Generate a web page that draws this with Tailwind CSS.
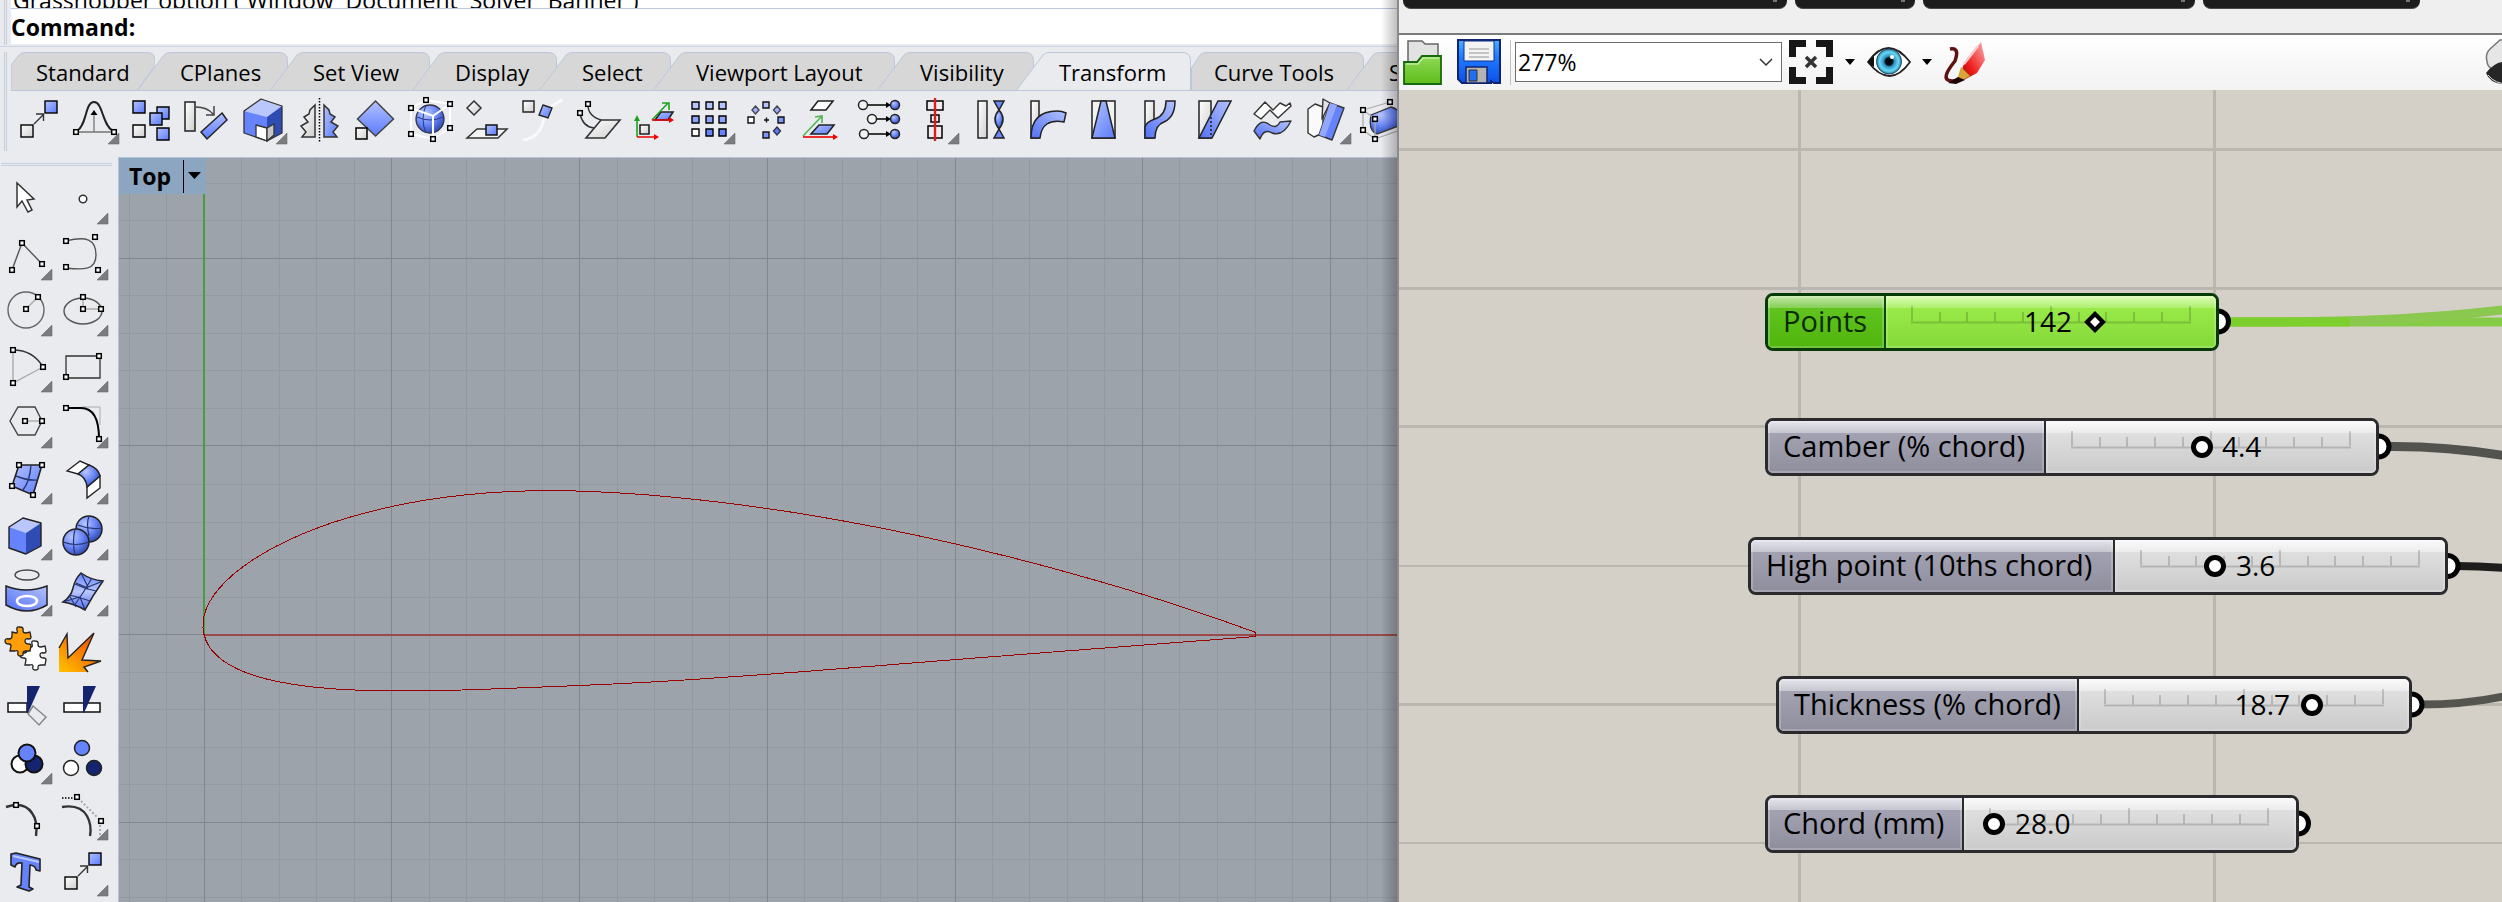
<!DOCTYPE html>
<html lang="en">
<head>
<meta charset="utf-8">
<title>Airfoil definition</title>
<script src="https://cdn.jsdelivr.net/npm/@tailwindcss/browser@4"></script>
</head>
<body class="bg-[#eaebef] text-black font-['Open_Sans','Noto_Sans',sans-serif]">

<!-- Shared shapes -->
<svg class="absolute size-0" aria-hidden="true">
  <defs>
    <linearGradient id="b" x1="0" y1="0" x2="1" y2="1"><stop offset="0" stop-color="#b3c2ff"/><stop offset="1" stop-color="#5b7bfb"/></linearGradient>
    <linearGradient id="bv" x1="0" y1="0" x2="0" y2="1"><stop offset="0" stop-color="#b3c2ff"/><stop offset="1" stop-color="#5b7bfb"/></linearGradient>
    <linearGradient id="bu" x1="0" y1="1" x2="1" y2="0"><stop offset="0" stop-color="#5270f5"/><stop offset="1" stop-color="#b3c2ff"/></linearGradient>
    <linearGradient id="w" x1="0" y1="0" x2="1" y2="1"><stop offset="0" stop-color="#fff"/><stop offset="1" stop-color="#cfcfcf"/></linearGradient>
    <radialGradient id="s" cx=".35" cy=".3" r=".8"><stop offset="0" stop-color="#b9c7ff"/><stop offset=".5" stop-color="#6a87f7"/><stop offset="1" stop-color="#2540a8"/></radialGradient>
    <linearGradient id="mesh" x1="0" y1="0" x2="0" y2="1"><stop offset="0" stop-color="#6583fb"/><stop offset=".5" stop-color="#bac7fd"/><stop offset="1" stop-color="#5270f5"/></linearGradient>
    <linearGradient id="fire" x1="0" y1="1" x2="1" y2="0"><stop offset="0" stop-color="#ffc400"/><stop offset="1" stop-color="#f23c00"/></linearGradient>
    <linearGradient id="gf" x1="0" y1="0" x2="0" y2="1"><stop offset="0" stop-color="#8fd957"/><stop offset="1" stop-color="#5fbd1b"/></linearGradient>
    <linearGradient id="sv" x1="0" y1="0" x2="0" y2="1"><stop offset="0" stop-color="#45b0ff"/><stop offset=".4" stop-color="#1f7bff"/><stop offset="1" stop-color="#0b50e8"/></linearGradient>
    <linearGradient id="red" x1="1" y1="0" x2="0" y2="1"><stop offset="0" stop-color="#f7b0b0"/><stop offset=".6" stop-color="#f01a1a"/><stop offset="1" stop-color="#7a0a0a"/></linearGradient>
    <radialGradient id="iris"><stop offset="0" stop-color="#000"/><stop offset=".3" stop-color="#04141c"/><stop offset=".42" stop-color="#2b8fc0"/><stop offset=".75" stop-color="#6ad7f5"/><stop offset="1" stop-color="#2a86a8"/></radialGradient>
    <rect id="n" x="-2.3" y="-2.3" width="4.6" height="4.6" fill="#fff" stroke="#000" stroke-width="1.5"/>
    <path id="m" d="M52 42v11H41z" fill="#7b7c7f" stroke="#6a6b6e" stroke-width=".6"/>
    <g id="mv"><rect x="10" y="34" width="12" height="12" fill="url(#w)" stroke="#000" stroke-width="1.4"/><rect x="34" y="10" width="12" height="12" fill="url(#b)" stroke="#000" stroke-width="1.4"/><path d="M23 33l9-9M25 23h7.500v7" fill="none" stroke="#333" stroke-width="1.4"/></g>
    <path id="pz" d="M-9-9l4 1q2 0 1-3-1-4 3-3 4 0 3 4 0 2 3 2l4-1 1 5q0 2-2 2-4-1-4 2t4 3q2 0 2 2l-1 5-4 0q-3 0-3 2 1 3-3 3-3 0-2-4 0-2-3-1l-5 0 1-5q0-2-2-2-4 0-4-3t4-2q3 0 3-3z"/>
    <g id="ticks" fill="none" stroke="#000" stroke-opacity=".16" stroke-width="2"><path d="M0 16.500h280M1 0v15M29 6v10M56 6v10M84 6v10M112 6v10M140 0v16M168 6v10M195 6v10M223 6v10M251 6v10M279 0v15"/></g>
  </defs>
</svg>

<main class="grid h-screen grid-cols-[1397fr_1105fr] overflow-hidden">

  <!-- Rhino window -->
  <section class="relative flex min-w-0 flex-col overflow-hidden">
    <div class="flex h-[47px] shrink-0 gap-1 border-b border-[#ccd4e2] pl-1">
      <div class="h-[45px] w-[3px] border-x border-[#c3ccdb]"></div>
      <div class="flex h-11 min-w-0 flex-1 flex-col bg-white">
        <div class="flex h-[9px] shrink-0 items-end overflow-hidden border-b border-[#bcc6dc] pl-[2px]"><span class="whitespace-pre text-[23px] leading-4">Grasshopper option ( Window  Document  Solver  Banner )</span></div>
        <label class="flex flex-1 items-center gap-2 text-[23px] font-bold leading-8">Command:<input aria-label="Command" class="h-8 flex-1 font-normal outline-none"></label>
      </div>
    </div>

    <div class="flex h-[110px] shrink-0 gap-1 pl-1 pt-[5px]">
      <div class="h-[99px] w-[3px] border-x border-[#c3ccdb]"></div>
      <div class="min-w-0 flex-1">
        <div class="flex h-[39px] overflow-hidden border-b border-[#bcc6dc] text-[22px] leading-[38px]" role="tablist">
          <button role="tab" class="relative h-[39px] w-[144px] shrink-0 pl-[25px] text-left"><svg class="absolute inset-0 -z-10" width="144" height="39"><path d="M0 39V13L8 3Q10 .5 14 .5H136q8 0 8 8V13L126 39z" fill="#d7d7d7" stroke="#bcc6dc"/></svg>Standard</button>
          <button role="tab" class="relative -ml-[18px] h-[39px] w-[151px] shrink-0 pl-[43px] text-left"><svg class="absolute inset-0 -z-10" width="151" height="39"><path d="M0 39L27 3Q29 .5 34 .5H142q8.500 0 8.500 8V39" fill="#d7d7d7" stroke="#bcc6dc"/></svg>CPlanes</button>
          <button role="tab" class="relative -ml-[18px] h-[39px] w-[160px] shrink-0 pl-[43px] text-left"><svg class="absolute inset-0 -z-10" width="160" height="39"><path d="M0 39L27 3Q29 .5 34 .5H151q8.500 0 8.500 8V39" fill="#d7d7d7" stroke="#bcc6dc"/></svg>Set View</button>
          <button role="tab" class="relative -ml-[18px] h-[39px] w-[145px] shrink-0 pl-[43px] text-left"><svg class="absolute inset-0 -z-10" width="145" height="39"><path d="M0 39L27 3Q29 .5 34 .5H136q8.500 0 8.500 8V39" fill="#d7d7d7" stroke="#bcc6dc"/></svg>Display</button>
          <button role="tab" class="relative -ml-[18px] h-[39px] w-[132px] shrink-0 pl-[43px] text-left"><svg class="absolute inset-0 -z-10" width="132" height="39"><path d="M0 39L27 3Q29 .5 34 .5H123q8.500 0 8.500 8V39" fill="#d7d7d7" stroke="#bcc6dc"/></svg>Select</button>
          <button role="tab" class="relative -ml-[18px] h-[39px] w-[242px] shrink-0 pl-[43px] text-left"><svg class="absolute inset-0 -z-10" width="242" height="39"><path d="M0 39L27 3Q29 .5 34 .5H233q8.500 0 8.500 8V39" fill="#d7d7d7" stroke="#bcc6dc"/></svg>Viewport Layout</button>
          <button role="tab" class="relative -ml-[18px] h-[39px] w-[157px] shrink-0 pl-[43px] text-left"><svg class="absolute inset-0 -z-10" width="157" height="39"><path d="M0 39L27 3Q29 .5 34 .5H148q8.500 0 8.500 8V39" fill="#d7d7d7" stroke="#bcc6dc"/></svg>Visibility</button>
          <button role="tab" aria-selected="true" class="relative -ml-[18px] h-[39px] w-[175px] shrink-0 pl-[43px] text-left"><svg class="absolute inset-0 -z-10" width="175" height="39"><path d="M0 39L27 3Q29 .5 34 .5H166q8.500 0 8.500 8V39" fill="#eaebef" stroke="#bcc6dc"/></svg>Transform</button>
          <button role="tab" class="relative h-[39px] w-[173px] shrink-0 pl-[23px] text-left"><svg class="absolute inset-0 -z-10" width="173" height="39"><path d="M.5 39V16L9 3Q11 .5 15 .5H164q8.500 0 8.500 8V39" fill="#d7d7d7" stroke="#bcc6dc"/></svg>Curve Tools</button>
          <button role="tab" class="relative -ml-[18px] h-[39px] w-[200px] shrink-0 pl-[43px] text-left"><svg class="absolute inset-0 -z-10" width="200" height="39"><path d="M0 39L27 3Q29 .5 34 .5H200V39" fill="#d7d7d7" stroke="#bcc6dc"/></svg>S</button>
        </div>

        <!-- Transform tools -->
        <div class="flex h-14 overflow-hidden [&>button]:h-14 [&>button]:w-14 [&>button]:shrink-0" role="toolbar" aria-label="Transform">
          <button aria-label="Move"><svg width="56" height="56"><use href="#mv"/></svg></button>
          <button aria-label="Soft move"><svg width="56" height="56" fill="none"><path d="M9 41H47M27 41V24" stroke="#777" stroke-width="1.300"/><path d="M23.500 24L27 19l3.500 5z" fill="#000"/><path d="M10 40C20 34 18 11 27 11s8 23 19 29" stroke="#222" stroke-width="2"/><use href="#n" x="9" y="41"/><use href="#n" x="47" y="41"/><use href="#m"/></svg></button>
          <button aria-label="Copy"><svg width="56" height="56" stroke="#000" stroke-width="1.400" fill="url(#b)"><path d="M10 10h12v12H10z"/><path d="M34 16h12v12H34z"/><path d="M27 22h12v12H27z"/><path d="M34 37h12v12H34z"/><path d="M10 34h12v12H10z" fill="url(#w)"/></svg></button>
          <button aria-label="Rotate"><svg width="56" height="56" stroke="#222" stroke-width="1.500" fill="none"><path d="M6 11h10v29H6z" fill="url(#w)"/><path d="M17 16q11 0 17 7M35 15v9h-8" stroke="#444"/><path d="M43 22l5 7-20 19-6-7z" fill="url(#bv)"/></svg></button>
          <button aria-label="Scale"><svg width="56" height="56" stroke="none" stroke-width="1.300" stroke-linejoin="round"><path d="M9 20l17-12 21 7-15 11z" fill="#bac7fd"/><path d="M9 20l23 6v24L9 42z" fill="#6583fb"/><path d="M47 15v27l-15 8V26z" fill="#2f4bb4"/><path d="M21 34l11 3v13l-11-4z" fill="#fff" stroke="#333"/><path d="M32 37l7-4v11l-7 6z" fill="#c8c8c8" stroke="#333"/><path d="M9 20l17-12 21 7v27l-15 8L9 42z" fill="none" stroke="#333"/><use href="#m"/></svg></button>
          <button aria-label="Mirror"><svg width="56" height="56" stroke="#333" stroke-width="1.500"><path d="M24 14v32H11l4-5-5-6 7-4-4-5 5-3 1-4z" fill="url(#w)"/><path d="M33 14v32h13l-4-5 5-6-7-4 4-5-5-3-1-4z" fill="url(#b)"/><path d="M28.500 7v44" stroke="#000" stroke-dasharray="1.500 1.500"/></svg></button>
          <button aria-label="Orient"><svg width="56" height="56" stroke="#444" stroke-width="1.500"><path d="M28.500 10l18 18-18 17-18-17z" fill="url(#bv)"/><path d="M9 37h11v11H9z" fill="url(#w)" stroke="#000"/></svg></button>
          <button aria-label="Cage edit"><svg width="56" height="56" fill="none"><circle cx="27" cy="28" r="14" fill="url(#s)" stroke="#334" stroke-width="1.300"/><path d="M14 26q13 6 26 0M23 14q-6 14 0 28" stroke="#243a90"/><path d="M23 9L47 13V37L30 48 8 43V17zM8 17l22 8 17-12M30 25v23" stroke="#fff" stroke-width="2"/><use href="#n" x="23" y="9"/><use href="#n" x="47" y="13"/><use href="#n" x="8" y="17"/><use href="#n" x="8" y="43"/><use href="#n" x="47" y="37"/><use href="#n" x="30" y="48"/></svg></button>
          <button aria-label="Project"><svg width="56" height="56" stroke="#333" stroke-width="1.500"><path d="M15 10l7 7-7 7-7-7z" fill="url(#w)"/><path d="M18 38h30l-9 9H8z" fill="#f4f4f4"/><path d="M27 34h11v10H27z" fill="url(#b)" stroke="#111"/></svg></button>
          <button aria-label="Orient on curve"><svg width="56" height="56" stroke="#222" stroke-width="1.400"><path d="M8 49Q24 47 28 31T48 9" fill="none" stroke="#fafafc" stroke-width="3"/><path d="M8 10h11v11H8z" fill="url(#w)"/><path d="M28 14l9 3-4 10-9-3z" fill="url(#b)"/></svg></button>
          <button aria-label="Orient on surface"><svg width="56" height="56" stroke="#333" stroke-width="1.400" fill="none"><path d="M17 14q0 11 13 15M9 23q3 13 14 14"/><path d="M30 29h19L34 47H15z" fill="url(#w)" stroke-width="1.600"/><use href="#n" x="17" y="13"/><use href="#n" x="9" y="22"/></svg></button>
          <button aria-label="Remap CPlane"><svg width="56" height="56" stroke-width="1.600" fill="none"><path d="M34 21h12l-5 8H28z" fill="url(#b)" stroke="#222"/><path d="M10 46V27M25 29L41 12M35 12h7v7" stroke="#1fa31f"/><path d="M7 30l3-6 3 6z" fill="#1fa31f"/><path d="M10 46h17M25 29h18" stroke="#e00"/><path d="M27 43l5 3-5 3zM42 26l5 3-5 3z" fill="#e00"/><path d="M13 34h9v9h-9z" fill="url(#w)" stroke="#222"/></svg></button>
          <button aria-label="Array"><svg width="56" height="56" stroke="#000" stroke-width="1.400"><path d="M9 11h7v7H9zM23 11h7v7h-7zM36 11h7v7h-7z" fill="#b5c4fd"/><path d="M9 25h7v7H9zM23 25h7v7h-7zM36 25h7v7h-7z" fill="#8ca3fc"/><path d="M23 38h7v7h-7zM36 38h7v7h-7z" fill="#6583fb"/><path d="M9 38h7v7H9z" fill="#fff"/><use href="#m" stroke="none"/></svg></button>
          <button aria-label="Polar array"><svg width="56" height="56" stroke="#111" stroke-width="1.400" fill="#9db0fc"><path d="M24 11h6v6h-6z" fill="#b5c4fd"/><path d="M39 26h6v6h-6zM24 41h6v6h-6z" fill="#7d97fb"/><path d="M9 26h6v6H9z" fill="#fff"/><path d="M16.500 15l3.500 4-3.500 4-3.500-4zM38 15l3.500 4-3.500 4-3.500-4z" stroke="#445"/><path d="M38 36l3.500 4-3.500 4-3.500-4z" fill="#5b7bfb" stroke="#334"/><path d="M25 29h5M27.500 26.500v5"/></svg></button>
          <button aria-label="Set points"><svg width="56" height="56" stroke="#222" stroke-width="1.600" fill="none"><path d="M23 10h15l-7 9H16z" fill="#fff"/><path d="M24 34h15l-7 9H16z" fill="url(#b)"/><path d="M8 45l19-20M20 26l7-1v7" stroke="#54b354"/><path d="M8 46h30" stroke="#e00"/><path d="M38 43l5 3-5 3z" fill="#e00" stroke="none"/></svg></button>
          <button aria-label="Align"><svg width="56" height="56" stroke="#222" stroke-width="1.500"><path d="M17 14h18M26 28h9M17 43h18" stroke="#000"/><path d="M35 11l5 3-5 3zM35 25l5 3-5 3zM35 40l5 3-5 3z" stroke="none"/><g fill="#f2f2f2"><circle cx="12" cy="14" r="4.500"/><circle cx="21" cy="28" r="4.500"/><circle cx="13" cy="43" r="4.500"/></g><g fill="url(#s)"><circle cx="44" cy="14" r="4.500"/><circle cx="44" cy="28" r="4.500"/><circle cx="44" cy="43" r="4.500"/></g></svg></button>
          <button aria-label="Distribute"><svg width="56" height="56" stroke="#000" stroke-width="1.500" fill="#eee"><path d="M20 10h16v9H20zM24 24h8v7h-8zM21 35h14v12H21z"/><path d="M28 7v43" stroke="#d81e1e" stroke-width="2.400"/><use href="#m" stroke="none"/></svg></button>
          <button aria-label="Twist"><svg width="56" height="56" stroke="#222" stroke-width="1.500"><path d="M15 10h9v37h-9z" fill="url(#w)"/><path d="M31 10h10l-5 9zM36 38l5 9H31z" fill="#6a87f7"/><path d="M36 19q8 9 0 19-8-10 0-19z" fill="url(#s)"/></svg></button>
          <button aria-label="Bend"><svg width="56" height="56" stroke="#222" stroke-width="1.500"><path d="M12 10h8v37h-8z" fill="url(#w)"/><path d="M12 47C12 30 20 20 38 20q5 0 9 2l-2 9q-22-4-24 16z" fill="url(#bu)"/></svg></button>
          <button aria-label="Taper"><svg width="56" height="56" stroke="#222" stroke-width="1.500"><path d="M17 10h23v37H17z" fill="#f2f2f2"/><path d="M26 10h5l9 37H17z" fill="url(#b)"/></svg></button>
          <button aria-label="Flow"><svg width="56" height="56" stroke="#222" stroke-width="1.500"><path d="M14 10h9v37h-9z" fill="url(#w)"/><path d="M14 47V36Q15 31 24 28 35 24 35 10h9q0 16-11 21-9 3-9 16z" fill="url(#bu)"/></svg></button>
          <button aria-label="Shear"><svg width="56" height="56" stroke="#222" stroke-width="1.500"><path d="M12 10h12v37H12z" fill="url(#w)"/><path d="M31 10h13L25 47H12z" fill="url(#bu)"/><path d="M24 26v20" stroke-dasharray="2 2"/></svg></button>
          <button aria-label="Smooth"><svg width="56" height="56" stroke="#333" stroke-width="1.400" stroke-linejoin="round"><path d="M11 23l11-12 8 8 7-7 6 3 4-3 1 3-13 12-8-8-9 9z" fill="#fff"/><path d="M11 40Q18 26 27 34q7 4 10-3l11-1q-8 16-19 12-8-5-12 6z" fill="url(#bu)"/></svg></button>
          <button aria-label="Box edit"><svg width="56" height="56" stroke="#333" stroke-width="1.400" stroke-linejoin="round"><path d="M9 18l7-5 8 3v26l-9 4-6-4z" fill="#fafafa"/><path d="M24 8l7 4-8 16z" fill="#e3e3e3"/><path d="M31 12l14 5-12 32-13-5z" fill="#6583fb"/><path d="M31 12l7 2-12 32-6-2z" fill="#93a8fd" stroke="none"/><use href="#m"/></svg></button>
          <button aria-label="Cage"><svg width="56" height="56" stroke="#333" stroke-width="1.300" fill="none"><path d="M16 24l20-8q12 3 10 18l-24 9q-9-3-6-19z" fill="url(#s)"/><path d="M8 19L35 11M8 39V19l12 9v20L8 39M20 48l25-9" stroke="#aaa"/><use href="#n" x="35" y="11"/><use href="#n" x="8" y="19"/><use href="#n" x="20" y="28"/><use href="#n" x="8" y="39"/><use href="#n" x="20" y="48"/></svg></button>
        </div>
      </div>
    </div>

    <div class="flex min-h-0 flex-1">
      <!-- Main tools -->
      <div class="w-[118px] shrink-0 overflow-hidden pl-px pt-[6px]">
        <div class="mr-[6px] h-[3px] border-y border-[#c3d0e0]"></div>
        <div class="-ml-px mt-[5px] grid grid-cols-[56px_56px] auto-rows-[56px] [&>button]:h-14" role="toolbar" aria-label="Main">
          <button aria-label="Select"><svg width="56" height="56"><path d="M17 12v24l5-6 6 11 4-2-5-10 7-1z" fill="#fff" stroke="#333" stroke-width="1.500"/></svg></button>
          <button aria-label="Point"><svg width="56" height="56"><circle cx="27" cy="28" r="3.800" fill="#fff" stroke="#333" stroke-width="1.500"/><use href="#m"/></svg></button>
          <button aria-label="Polyline"><svg width="56" height="56"><path d="M12 43l10-27 20 21" fill="none" stroke="#555" stroke-width="1.400"/><use href="#n" x="22" y="16"/><use href="#n" x="12" y="43"/><use href="#n" x="42" y="37"/><use href="#m"/></svg></button>
          <button aria-label="Curve"><svg width="56" height="56"><path d="M10 14C30 9 40 12 40 28 40 43 28 43 10 41" fill="none" stroke="#555" stroke-width="1.400"/><use href="#n" x="10" y="14"/><use href="#n" x="39" y="10"/><use href="#n" x="10" y="40"/><use href="#m"/><use href="#n" x="42" y="43"/></svg></button>
          <button aria-label="Circle"><svg width="56" height="56"><g fill="none" stroke="#666" stroke-width="1.400"><circle cx="26" cy="27" r="18"/><path d="M26 26l12-12" stroke="#aaa"/></g><use href="#n" x="26" y="26"/><use href="#n" x="38" y="14"/><use href="#m"/></svg></button>
          <button aria-label="Ellipse"><svg width="56" height="56"><g fill="none" stroke="#555" stroke-width="1.400"><ellipse cx="27" cy="28" rx="19" ry="13"/><path d="M27 14v12h18" stroke="#aaa"/></g><use href="#n" x="27" y="14"/><use href="#n" x="27" y="26"/><use href="#n" x="45" y="26"/><use href="#m"/></svg></button>
          <button aria-label="Arc"><svg width="56" height="56"><g fill="none" stroke-width="1.400"><path d="M43 28L13 44V11" stroke="#aaa"/><path d="M13 11q20 0 30 17" stroke="#333"/></g><use href="#n" x="13" y="11"/><use href="#n" x="43" y="28"/><use href="#n" x="13" y="44"/><use href="#m"/></svg></button>
          <button aria-label="Rectangle"><svg width="56" height="56"><path d="M10 17h34v22H10z" fill="none" stroke="#333" stroke-width="1.300"/><use href="#n" x="43" y="17"/><use href="#n" x="10" y="38"/><use href="#m"/></svg></button>
          <button aria-label="Polygon"><svg width="56" height="56"><g fill="none" stroke="#444" stroke-width="1.400"><path d="M18 12h17l7 14-7 14H18l-8-14z"/><path d="M25 26h17" stroke="#aaa"/></g><use href="#n" x="25" y="26"/><use href="#n" x="42" y="26"/><use href="#m"/></svg></button>
          <button aria-label="Fillet"><svg width="56" height="56"><g fill="none"><path d="M26 12h18v18" stroke="#aaa"/><path d="M10 13h15q18 0 18 31" stroke="#000" stroke-width="2"/></g><use href="#n" x="10" y="13"/><use href="#m"/><use href="#n" x="43" y="44"/></svg></button>
          <button aria-label="Surface"><svg width="56" height="56"><path d="M19 14h23l-9 30-21-9z" fill="url(#b)" stroke="#222" stroke-width="1.600"/><path d="M31 14q-1 16-8 25M16 25q12 5 22 4" fill="none" stroke="#26356e" stroke-width="1.400"/><use href="#n" x="19" y="14"/><use href="#n" x="42" y="14"/><use href="#n" x="12" y="35"/><use href="#n" x="33" y="44"/><use href="#m"/></svg></button>
          <button aria-label="Fillet surface"><svg width="56" height="56" stroke="#222" stroke-width="1.400"><path d="M11 20l13-10 9 4-11 9zM31 36l13-11v12L31 47z" fill="#fff"/><path d="M22 23l11-9q9 3 11 11L31 36q-1-10-9-13z" fill="url(#s)"/><use href="#m"/></svg></button>
          <button aria-label="Box"><svg width="56" height="56" stroke="none" stroke-width="1.400" stroke-linejoin="round"><path d="M9 20l14-9 18 5-15 10z" fill="#bac7fd"/><path d="M9 20l17 6v21L9 41z" fill="#6583fb"/><path d="M41 16v23l-15 8V26z" fill="#2f4bb4"/><path d="M9 20l14-9 18 5v23l-15 8-17-6z" fill="none" stroke="#222"/><use href="#m"/></svg></button>
          <button aria-label="Boolean union"><svg width="56" height="56" stroke="#222" stroke-width="1.500"><circle cx="33" cy="22" r="13" fill="url(#s)"/><circle cx="20" cy="35" r="13" fill="url(#s)"/><path d="M7 35q13 5 26 0M19 22q-3 12 0 26M22 18q12 5 24 3M33 9q-3 8 0 20" fill="none" stroke="#26356e" stroke-width="1.200"/><use href="#m"/></svg></button>
          <button aria-label="Project curves"><svg width="56" height="56"><ellipse cx="27" cy="12" rx="12" ry="5" fill="none" stroke="#444" stroke-width="1.300"/><path d="M6 23q20 8 41 0v19q-20 12-41 0z" fill="url(#bu)" stroke="#222" stroke-width="1.500"/><ellipse cx="27" cy="38" rx="10" ry="5" fill="none" stroke="#fff" stroke-width="2.500"/><use href="#m"/></svg></button>
          <button aria-label="Mesh"><svg width="56" height="56"><path d="M25 10q10 7 22 8-10 14-18 29-10-6-22-8 8-5 10-14 2-9 8-15z" fill="url(#mesh)" stroke="#222" stroke-width="1.500"/><path d="M19 21q10 5 21 7M13 32q10 2 21 6M36 15q-8 14-18 28M25 10l7 14 15-6M20 20l12 5M7 39l17-5 5 13M13 32l7 12" fill="none" stroke="#26356e" stroke-width="1.200"/><use href="#m"/></svg></button>
          <button aria-label="Join"><svg width="56" height="56" stroke="#222" stroke-width="1.300"><use href="#pz" x="36" y="36" fill="#fff"/><use href="#pz" x="21" y="22" fill="#ff9d0a"/></svg></button>
          <button aria-label="Explode"><svg width="56" height="56"><path d="M3 53V29l8-14 1 24 26-25-12 27 19 1-17 6 4 5z" fill="url(#fire)"/><path d="M3 29l8-14 1 24 26-25-12 27 19 1-17 6 4 5" fill="none" stroke="#222" stroke-width="1.400"/></svg></button>
          <button aria-label="Trim"><svg width="56" height="56"><path d="M8 28h19v9H8z" fill="#fff" stroke="#111" stroke-width="1.500"/><path d="M33 31l13 11-7 8-11-11z" fill="none" stroke="#888" stroke-width="1.500"/><path d="M27 11h13L28 38h-1z" fill="#14246e"/></svg></button>
          <button aria-label="Split"><svg width="56" height="56"><path d="M8 28h36v9H8z" fill="#fff" stroke="#111" stroke-width="1.500"/><path d="M27 11h13L28 38h-1z" fill="#14246e"/></svg></button>
          <button aria-label="Group"><svg width="56" height="56" stroke="#111" stroke-width="2"><circle cx="20" cy="33" r="8.500" fill="#fff"/><circle cx="34" cy="33" r="8.500" fill="#14246e"/><circle cx="27" cy="22" r="8.500" fill="#6583fb"/><use href="#m"/></svg></button>
          <button aria-label="Ungroup"><svg width="56" height="56" stroke="#222" stroke-width="1.500"><circle cx="15" cy="37" r="7.500" fill="#fff"/><circle cx="38" cy="37" r="7.500" fill="#14246e"/><circle cx="26" cy="17" r="7.500" fill="#6583fb"/></svg></button>
          <button aria-label="Edit points"><svg width="56" height="56"><path d="M6 20q18-6 26 6 6 8 4 23" fill="none" stroke="#333" stroke-width="2.400"/><use href="#n" x="16" y="18"/><use href="#n" x="37" y="39"/></svg></button>
          <button aria-label="Control points"><svg width="56" height="56" fill="none"><path d="M6 20q18-3 25 9 5 9 3 20" stroke="#333" stroke-width="2.400"/><path d="M6 11h13" stroke="#000" stroke-width="1.400" stroke-dasharray="1.500 1.500"/><path d="M25 14l17 17M44 38v12" stroke="#aaa" stroke-width="2" stroke-dasharray="2 2"/><use href="#m"/><use href="#n" x="21" y="10"/><use href="#n" x="45" y="34"/></svg></button>
          <button aria-label="Text"><svg width="56" height="56"><path d="M11 11l5-1 24 6v12l-4-1q0-4-6-5l-1 22 4 2-4 2-12-4 4-2 1-22q-6-1-7 4l-4-2z" fill="#6583fb" stroke="#222" stroke-width="1.600" stroke-linejoin="round"/><path d="M13 13l26 6" stroke="#bac7fd" stroke-width="2"/></svg></button>
          <button aria-label="Move object"><svg width="56" height="56"><use href="#mv" x="-1"/><use href="#m"/></svg></button>
        </div>
      </div>

      <!-- Top viewport -->
      <div class="relative min-w-0 flex-1 overflow-hidden border-l border-t border-[#b8c2d6] bg-[#9da3ab]">
        <svg class="absolute inset-0 h-full w-full" role="img" aria-label="Airfoil curve">
          <g transform="translate(-119 -158)" fill="none" shape-rendering="crispEdges">
            <path stroke="#929aa1" d="M129.500 158v800M166.500 158v800M241.500 158v800M279.500 158v800M316.500 158v800M354.500 158v800M429.500 158v800M466.500 158v800M504.500 158v800M542.500 158v800M617.500 158v800M654.500 158v800M692.500 158v800M729.500 158v800M804.500 158v800M842.500 158v800M880.500 158v800M917.500 158v800M992.500 158v800M1029.500 158v800M1067.500 158v800M1104.500 158v800M1179.500 158v800M1217.500 158v800M1255.500 158v800M1292.500 158v800M1367.500 158v800M119 183.500h1400M119 220.500h1400M119 295.500h1400M119 333.500h1400M119 370.500h1400M119 408.500h1400M119 484.500h1400M119 522.500h1400M119 559.500h1400M119 597.500h1400M119 672.500h1400M119 709.500h1400M119 747.500h1400M119 784.500h1400M119 859.500h1400M119 897.500h1400"/>
            <path stroke="#82868f" d="M204.500 158v800M391.500 158v800M579.500 158v800M767.500 158v800M955.500 158v800M1142.500 158v800M1330.500 158v800M119 258.500h1400M119 445.500h1400M119 634.500h1400M119 822.500h1400"/>
            <path stroke="#4a9a40" stroke-width="2" d="M204 158v476"/>
            <path stroke="#9a4a4a" stroke-width="2" d="M204 635h1400"/>
            <path id="airfoil" stroke="#990000" d=""/>
          </g>
        </svg>
        <button class="relative flex h-9 w-[87px] items-center bg-[#8ca5c0] pl-[10px] text-left text-[23px] font-bold leading-8">Top
          <svg class="absolute right-0 top-0" width="26" height="36"><path d="M3.500 2v33" stroke="#000"/><path d="M8 14h13l-6.500 7z"/></svg>
        </button>
      </div>
    </div>
    <div class="pointer-events-none absolute inset-y-0 right-0 w-4 bg-linear-to-l from-black/25 to-transparent"></div>
  </section>

  <!-- Grasshopper window -->
  <section class="flex min-w-0 flex-col overflow-hidden border-l-2 border-[#8b8b8b] bg-[#efefef]">
    <div class="flex h-[33px] shrink-0 items-start gap-2 pl-1">
      <div class="flex h-[9px] w-[384px] shrink-0 justify-end rounded-b-lg border-b border-[#4a4a4a] bg-[#1d1d1d] pr-[10px]"><span class="h-[2px] w-1 bg-[#777]"></span></div>
      <div class="flex h-[9px] w-[120px] shrink-0 justify-end rounded-b-lg border-b border-[#4a4a4a] bg-[#1d1d1d] pr-[10px]"><span class="h-[2px] w-1 bg-[#777]"></span></div>
      <div class="flex h-[9px] w-[272px] shrink-0 justify-end rounded-b-lg border-b border-[#4a4a4a] bg-[#1d1d1d] pr-[10px]"><span class="h-[2px] w-1 bg-[#777]"></span></div>
      <div class="flex h-[9px] w-[217px] shrink-0 justify-end rounded-b-lg border-b border-[#4a4a4a] bg-[#1d1d1d] pr-[10px]"><span class="h-[2px] w-1 bg-[#777]"></span></div>
    </div>
    <div class="flex h-[57px] shrink-0 items-center overflow-hidden border-t-2 border-[#7b7b7b] bg-linear-to-b from-white via-[#f8f8f8] to-[#f3f3f3] pb-px [&>button]:shrink-0" role="toolbar" aria-label="Canvas">
      <button aria-label="Open" class="ml-1"><svg width="42" height="46"><path d="M5 2h14l3 3h13v22H5z" fill="#e2e2e2" stroke="#666" stroke-width="1.500"/><path d="M1 23h13l5-6h19v28H1z" fill="url(#gf)" stroke="#17690c" stroke-width="1.800"/><path d="M3 25h12l5-6h16" fill="none" stroke="#c1eba0" stroke-width="1.500"/></svg></button>
      <button aria-label="Save" class="ml-3"><svg width="44" height="46"><path d="M1 1h42v43h-6l-3-2v2H5l-4-4z" fill="url(#sv)" stroke="#10246e" stroke-width="2"/><path d="M7 2h30v20H7z" fill="#f3f3f3" stroke="#10308e"/><path d="M12 10h20M12 14h20M12 18h20" stroke="#c4c4c4" stroke-width="2"/><path d="M9 28h21v16H9z" fill="#b4b4b4" stroke="#10246e" stroke-width="1.500"/><path d="M12 31h8v11h-8z" fill="#1f6ff0" stroke="#333"/></svg></button>
      <div class="ml-[9px] mr-1 h-[45px] w-px shrink-0 bg-[#c2c2c2]"></div>
      <div class="relative shrink-0">
        <select aria-label="Zoom" class="block h-10 w-[267px] appearance-none border border-[#6e6e6e] bg-white pl-[2px] text-[23px] leading-9"><option>277%</option></select>
        <svg class="pointer-events-none absolute right-[9px] top-4" width="14" height="9"><path d="M1 1l6 6 6-6" fill="none" stroke="#333" stroke-width="1.500"/></svg>
      </div>
      <button aria-label="Zoom extents" class="ml-[6px]"><svg width="46" height="46"><g fill="none" stroke="#171717" stroke-width="7"><path d="M4.500 18V4.500H18M28 4.500H41.500V18M41.500 28V41.500H28M18 41.500H4.500V28"/><path d="M18 18l10 10M28 18L18 28" stroke="#333" stroke-width="3.500"/></g></svg></button>
      <button aria-label="Zoom options" class="ml-[11px]"><svg width="10" height="6"><path d="M0 0h10L5 6z"/></svg></button>
      <button aria-label="Preview" class="ml-[11px]"><svg width="46" height="32"><path d="M2 16Q22-12 44 16 24 44 2 16z" fill="#fff" stroke="#222" stroke-width="1.800"/><path d="M2 16q2-4 6-6v11q-4-2-6-5z" fill="#111"/><circle cx="23" cy="15.500" r="12.500" fill="url(#iris)" stroke="#246"/><circle cx="26" cy="11" r="2" fill="#fff"/></svg></button>
      <button aria-label="Preview options" class="ml-[10px]"><svg width="10" height="6"><path d="M0 0h10L5 6z"/></svg></button>
      <button aria-label="Sketch" class="ml-[10px]"><svg width="46" height="46"><path d="M8 10Q18 8 13 22 0 38 6 41 12 44 21 38" fill="none" stroke="#5e1212" stroke-width="3.500"/><path d="M39 3l4 18-8 13-15 8-3 1 4-16z" fill="url(#red)"/><path d="M19 28l9 9-9 5-5 2z" fill="#d7a63a"/><path d="M36 7L22 25" stroke="#fbc9c9" stroke-width="2.500"/><path d="M16 38l7 3-9 4-8-1z" fill="#1d0606"/></svg></button>
      <div class="flex-1"></div>
      <button aria-label="Shading" class="-mr-7"><svg width="46" height="46"><path d="M3 22Q1 15 6 10L16 1h12v28L8 30q-5-3-5-8z" fill="#e6e6e6" stroke="#777" stroke-width="1.500"/><path d="M2 34Q10 24 18 23h20v22H18Q6 44 2 34z" fill="#262626"/><path d="M4 36q7 9 20 9" fill="none" stroke="#ddd"/></svg></button>
    </div>

    <!-- Definition canvas -->
    <div class="relative min-h-0 flex-1 overflow-hidden bg-[#d4d0c8]">
      <svg class="absolute inset-0 h-full w-full" aria-hidden="true">
        <g transform="translate(-1399 -90)" fill="none">
          <path stroke="#bbb7b0" stroke-width="3" d="M1799.500 90v900M2214.500 90v900M1399 149.500h1200M1399 288.500h1200M1399 426.500h1200M1399 704.500h1200"/>
          <path stroke="#bbb7b0" stroke-width="2" d="M1399 566h1200M1399 843h1200"/>
          <path stroke="#86cb46" stroke-width="9" d="M2228 322h300"/>
          <path stroke="#8bc850" stroke-width="9" d="M2228 322C2340 322 2420 320 2510 309"/>
          <path stroke="#7ccf2c" stroke-width="9" d="M2228 322H2350"/>
          <path stroke="#52524e" stroke-width="9" d="M2388 446.500Q2450 446 2512 457"/>
          <path stroke="#1d1d1b" stroke-width="8" d="M2456 566q28 0 60 3"/>
          <path stroke="#55554f" stroke-width="8" d="M2420 704.500q50 0 92-10"/>
          <g fill="#fff" stroke="#000" stroke-width="5">
            <circle cx="2218" cy="321.500" r="10.500"/><circle cx="2378.500" cy="446.500" r="10.500"/><circle cx="2447.500" cy="566" r="10.500"/><circle cx="2411.500" cy="704.500" r="10.500"/><circle cx="2298" cy="823.500" r="10.500"/>
          </g>
        </g>
      </svg>

      <div class="absolute left-[366px] top-[203px] flex h-[58px] overflow-hidden rounded-lg border-[3px] border-[#063a06] text-[28px] leading-[50px]">
        <label for="points" class="w-[118px] border-r-2 border-[#0b4a08] bg-[linear-gradient(#c4e8a8,#84cf55_12px,#60c31f_12px,#50b50c)] pl-[15px] text-[29px] text-[#0a2a04] shadow-[inset_0_0_0_2px_#ffffff33]">Points</label>
        <div class="relative w-[330px] bg-[linear-gradient(#dcfbb8,#aef06c_12px,#98ea48_12px,#84d838)] shadow-[inset_0_0_0_2px_#ffffff33]">
          <svg class="absolute left-[25px] top-[10px]" width="280" height="20"><use href="#ticks"/></svg>
          <output for="points" class="absolute right-[144px] top-0">142</output>
          <input id="points" type="range" min="0" max="215" value="142" class="absolute left-[15px] top-[15px] h-[22px] w-[299px] appearance-none bg-transparent [&::-webkit-slider-thumb]:h-[22px] [&::-webkit-slider-thumb]:w-[22px] [&::-webkit-slider-thumb]:appearance-none [&::-webkit-slider-thumb]:bg-[linear-gradient(white,white)] [&::-webkit-slider-thumb]:bg-size-[10px_10px] [&::-webkit-slider-thumb]:bg-center [&::-webkit-slider-thumb]:bg-no-repeat [&::-webkit-slider-thumb]:bg-black [&::-webkit-slider-thumb]:rotate-45 [&::-webkit-slider-thumb]:scale-70">
        </div>
      </div>

      <div class="absolute left-[366px] top-[328px] flex h-[58px] overflow-hidden rounded-lg border-[3px] border-[#2b2b2d] text-[28px] leading-[50px]">
        <label for="camber" class="w-[278px] border-r-2 border-[#2b2b2d] bg-[linear-gradient(#e4e4ec,#c6c6d0_12px,#a3a2b2_12px,#8f8e9d)] pl-[15px] text-[29px] shadow-[inset_0_0_0_2px_#ffffff33]">Camber (% chord)</label>
        <div class="relative w-[330px] bg-[linear-gradient(#fafafa,#ececec_12px,#dfdfdf_12px,#cacaca)] shadow-[inset_0_0_0_2px_#ffffff33]">
          <svg class="absolute left-[25px] top-[10px]" width="280" height="20"><use href="#ticks"/></svg>
          <output for="camber" class="absolute left-[176px] top-0">4.4</output>
          <input id="camber" type="range" min="0" max="9.4" step="0.1" value="4.4" class="absolute left-[15px] top-[15px] h-[22px] w-[299px] appearance-none bg-transparent [&::-webkit-slider-thumb]:h-[22px] [&::-webkit-slider-thumb]:w-[22px] [&::-webkit-slider-thumb]:appearance-none [&::-webkit-slider-thumb]:rounded-full [&::-webkit-slider-thumb]:border-5 [&::-webkit-slider-thumb]:border-black [&::-webkit-slider-thumb]:bg-white">
        </div>
      </div>

      <div class="absolute left-[349px] top-[447px] flex h-[58px] overflow-hidden rounded-lg border-[3px] border-[#2b2b2d] text-[28px] leading-[50px]">
        <label for="high" class="w-[364px] border-r-2 border-[#2b2b2d] bg-[linear-gradient(#e4e4ec,#c6c6d0_12px,#a3a2b2_12px,#8f8e9d)] pl-[15px] text-[29px] shadow-[inset_0_0_0_2px_#ffffff33]">High point (10ths chord)</label>
        <div class="relative w-[330px] bg-[linear-gradient(#fafafa,#ececec_12px,#dfdfdf_12px,#cacaca)] shadow-[inset_0_0_0_2px_#ffffff33]">
          <svg class="absolute left-[25px] top-[10px]" width="280" height="20"><use href="#ticks"/></svg>
          <output for="high" class="absolute left-[121px] top-0">3.6</output>
          <input id="high" type="range" min="1" max="10.7" step="0.1" value="3.6" class="absolute left-[15px] top-[15px] h-[22px] w-[299px] appearance-none bg-transparent [&::-webkit-slider-thumb]:h-[22px] [&::-webkit-slider-thumb]:w-[22px] [&::-webkit-slider-thumb]:appearance-none [&::-webkit-slider-thumb]:rounded-full [&::-webkit-slider-thumb]:border-5 [&::-webkit-slider-thumb]:border-black [&::-webkit-slider-thumb]:bg-white">
        </div>
      </div>

      <div class="absolute left-[377px] top-[586px] flex h-[58px] overflow-hidden rounded-lg border-[3px] border-[#2b2b2d] text-[28px] leading-[50px]">
        <label for="thick" class="w-[300px] border-r-2 border-[#2b2b2d] bg-[linear-gradient(#e4e4ec,#c6c6d0_12px,#a3a2b2_12px,#8f8e9d)] pl-[15px] text-[29px] shadow-[inset_0_0_0_2px_#ffffff33]">Thickness (% chord)</label>
        <div class="relative w-[330px] bg-[linear-gradient(#fafafa,#ececec_12px,#dfdfdf_12px,#cacaca)] shadow-[inset_0_0_0_2px_#ffffff33]">
          <svg class="absolute left-[25px] top-[10px]" width="280" height="20"><use href="#ticks"/></svg>
          <output for="thick" class="absolute right-[119px] top-0">18.7</output>
          <input id="thick" type="range" min="0" max="25" step="0.1" value="18.7" class="absolute left-[15px] top-[15px] h-[22px] w-[299px] appearance-none bg-transparent [&::-webkit-slider-thumb]:h-[22px] [&::-webkit-slider-thumb]:w-[22px] [&::-webkit-slider-thumb]:appearance-none [&::-webkit-slider-thumb]:rounded-full [&::-webkit-slider-thumb]:border-5 [&::-webkit-slider-thumb]:border-black [&::-webkit-slider-thumb]:bg-white">
        </div>
      </div>

      <div class="absolute left-[366px] top-[705px] flex h-[58px] overflow-hidden rounded-lg border-[3px] border-[#2b2b2d] text-[28px] leading-[50px]">
        <label for="chord" class="w-[196px] border-r-2 border-[#2b2b2d] bg-[linear-gradient(#e4e4ec,#c6c6d0_12px,#a3a2b2_12px,#8f8e9d)] pl-[15px] text-[29px] shadow-[inset_0_0_0_2px_#ffffff33]">Chord (mm)</label>
        <div class="relative w-[332px] bg-[linear-gradient(#fafafa,#ececec_12px,#dfdfdf_12px,#cacaca)] shadow-[inset_0_0_0_2px_#ffffff33]">
          <svg class="absolute left-[25px] top-[10px]" width="280" height="20"><use href="#ticks"/></svg>
          <output for="chord" class="absolute left-[51px] top-0">28.0</output>
          <input id="chord" type="range" min="25" max="250" step="0.1" value="28" class="absolute left-[15px] top-[15px] h-[22px] w-[299px] appearance-none bg-transparent [&::-webkit-slider-thumb]:h-[22px] [&::-webkit-slider-thumb]:w-[22px] [&::-webkit-slider-thumb]:appearance-none [&::-webkit-slider-thumb]:rounded-full [&::-webkit-slider-thumb]:border-5 [&::-webkit-slider-thumb]:border-black [&::-webkit-slider-thumb]:bg-white">
        </div>
      </div>
    </div>
  </section>
</main>

<script>
  // NACA four-digit section: camber m, high point p, thickness t, drawn at 37.55 px per mm.
  const num = id => Number(document.getElementById(id).value);
  function draw() {
    const m = num('camber') / 100, p = num('high') / 10, t = num('thick') / 100;
    const c = num('chord') * 37.55, count = num('points') / 2;
    const side = sign => Array.from({ length: Math.floor(count) + 1 }, (_, i) => {
      const x = (1 - Math.cos(Math.PI * i / Math.floor(count))) / 2;
      const h = 5 * t * (0.2969 * Math.sqrt(x) - 0.126 * x - 0.3516 * x ** 2 + 0.2843 * x ** 3 - 0.1015 * x ** 4);
      const front = x < p;
      const y = front ? m / p ** 2 * (2 * p * x - x * x) : m / (1 - p) ** 2 * (1 - 2 * p + 2 * p * x - x * x);
      const a = Math.atan(2 * m / (front ? p ** 2 : (1 - p) ** 2) * (p - x));
      return [204 + c * (x - sign * h * Math.sin(a)), 634.5 - c * (y + sign * h * Math.cos(a))];
    });
    const pts = side(1).reverse().concat(side(-1));
    document.getElementById('airfoil').setAttribute('d', 'M' + pts.map(q => q.map(v => v.toFixed(1)).join(' ')).join('L') + 'Z');
  }
  for (const input of document.querySelectorAll('input[type=range]')) {
    input.addEventListener('input', () => {
      document.querySelector(`output[for=${input.id}]`).value = input.step ? Number(input.value).toFixed(1) : input.value;
      draw();
    });
  }
  draw();
</script>
</body>
</html>
